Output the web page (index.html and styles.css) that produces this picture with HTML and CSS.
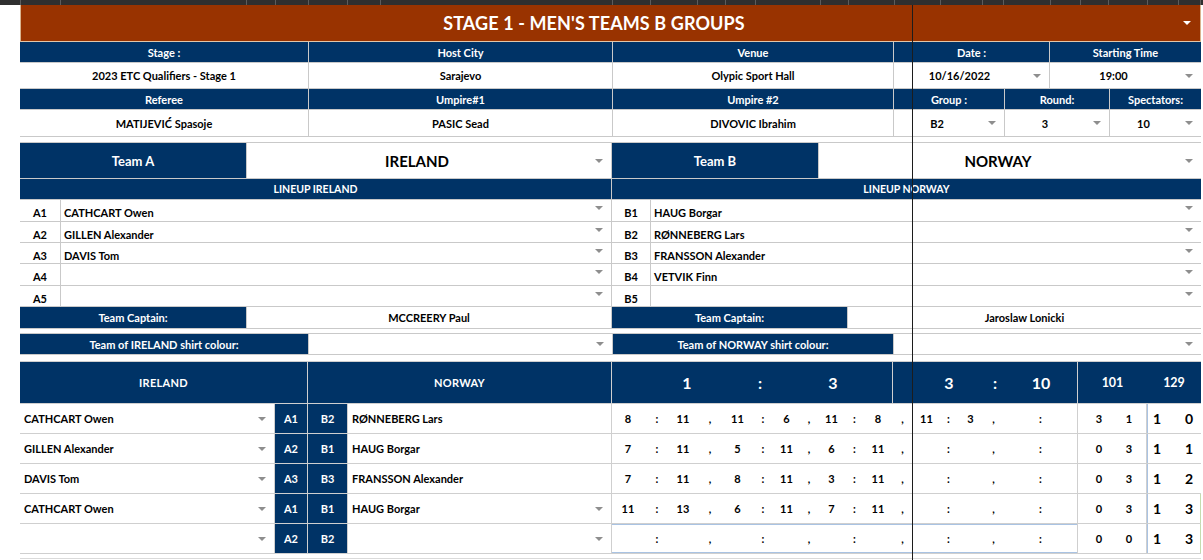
FILE: index.html
```html
<!DOCTYPE html>
<html lang="en">
<head>
<meta charset="utf-8">
<title>Stage 1 - Men's Teams B Groups</title>
<link rel="stylesheet" href="styles.css">
</head>
<body>
<div class="sheet">
  <div class="colhdr"></div>

  <div class="title">
    <h1>STAGE 1 - MEN'S TEAMS B GROUPS</h1>
    <i class="arr arr-white"></i>
  </div>

  <div class="info">
    <div class="cell navy">Stage :</div>
    <div class="cell navy">Host City</div>
    <div class="cell navy">Venue</div>
    <div class="cell navy span2">Date :</div>
    <div class="cell navy span2">Starting Time</div>

    <div class="cell">2023 ETC Qualifiers - Stage 1</div>
    <div class="cell">Sarajevo</div>
    <div class="cell">Olypic Sport Hall</div>
    <div class="cell dd span2"><span class="v">10/16/2022</span><i class="arr"></i></div>
    <div class="cell dd span2"><span class="v">19:00</span><i class="arr"></i></div>

    <div class="cell navy">Referee</div>
    <div class="cell navy">Umpire#1</div>
    <div class="cell navy">Umpire #2</div>
    <div class="cell navy">Group :</div>
    <div class="cell navy span2">Round:</div>
    <div class="cell navy">Spectators:</div>

    <div class="cell">MATIJEVIĆ Spasoje</div>
    <div class="cell">PASIC Sead</div>
    <div class="cell">DIVOVIC Ibrahim</div>
    <div class="cell dd"><span class="v">B2</span><i class="arr"></i></div>
    <div class="cell dd span2"><span class="v">3</span><i class="arr"></i></div>
    <div class="cell dd"><span class="v">10</span><i class="arr"></i></div>
  </div>

  <div class="teams">
    <div class="panel panel-a">
      <div class="cell navy team span2">Team A</div>
      <div class="cell dd teamname span2"><span class="v">IRELAND</span><i class="arr"></i></div>
      <div class="cell navy lineup spanall">LINEUP IRELAND</div>

      <div class="cell lab">A1</div>
      <div class="cell lname span3"><span class="v">CATHCART Owen</span><i class="arr"></i></div>
      <div class="cell lab">A2</div>
      <div class="cell lname span3"><span class="v">GILLEN Alexander</span><i class="arr"></i></div>
      <div class="cell lab">A3</div>
      <div class="cell lname span3"><span class="v">DAVIS Tom</span><i class="arr"></i></div>
      <div class="cell lab">A4</div>
      <div class="cell lname span3"><span class="v"></span><i class="arr"></i></div>
      <div class="cell lab">A5</div>
      <div class="cell lname span3"><span class="v"></span><i class="arr"></i></div>

      <div class="cell navy span2">Team Captain:</div>
      <div class="cell span2">MCCREERY Paul</div>
    </div>

    <div class="panel panel-b">
      <div class="cell navy team span2">Team B</div>
      <div class="cell dd teamname span3"><span class="v">NORWAY</span><i class="arr"></i></div>
      <div class="cell navy lineup spanall">LINEUP NORWAY</div>

      <div class="cell lab">B1</div>
      <div class="cell lname span4"><span class="v">HAUG Borgar</span><i class="arr"></i></div>
      <div class="cell lab">B2</div>
      <div class="cell lname span4"><span class="v">RØNNEBERG Lars</span><i class="arr"></i></div>
      <div class="cell lab">B3</div>
      <div class="cell lname span4"><span class="v">FRANSSON Alexander</span><i class="arr"></i></div>
      <div class="cell lab">B4</div>
      <div class="cell lname span4"><span class="v">VETVIK Finn</span><i class="arr"></i></div>
      <div class="cell lab">B5</div>
      <div class="cell lname span4"><span class="v"></span><i class="arr"></i></div>

      <div class="cell navy span3">Team Captain:</div>
      <div class="cell span2">Jaroslaw Lonicki</div>
    </div>
  </div>

  <div class="shirt">
    <div class="cell navy">Team of IRELAND shirt colour:</div>
    <div class="cell dd"><span class="v"></span><i class="arr"></i></div>
    <div class="cell navy">Team of NORWAY shirt colour:</div>
    <div class="cell dd"><span class="v"></span><i class="arr"></i></div>
  </div>

  <div class="match">
    <div class="cell navy mhead span2">IRELAND</div>
    <div class="cell navy mhead span2">NORWAY</div>
    <div class="cell navy score s13"><span>1</span><span>:</span><span>3</span></div>
    <div class="cell navy score s310"><span>3</span><span>:</span><span>10</span></div>
    <div class="cell navy pts span2"><span>101</span><span>129</span></div>

    <!-- row 1 -->
    <div class="cell pname"><span class="v">CATHCART Owen</span><i class="arr"></i></div>
    <div class="cell navy box">A1</div>
    <div class="cell navy box">B2</div>
    <div class="cell pname"><span class="v">RØNNEBERG Lars</span></div>
    <div class="cell games span2">
      <span>8</span><span>:</span><span>11</span><span>,</span>
      <span>11</span><span>:</span><span>6</span><span>,</span>
      <span>11</span><span>:</span><span>8</span><span>,</span>
      <span>11</span><span>:</span><span>3</span><span>,</span>
      <span></span><span>:</span><span></span>
    </div>
    <div class="cell wins"><span>3</span><span>1</span></div>
    <div class="cell sets"><span>1</span><span>0</span></div>

    <!-- row 2 -->
    <div class="cell pname"><span class="v">GILLEN Alexander</span><i class="arr"></i></div>
    <div class="cell navy box">A2</div>
    <div class="cell navy box">B1</div>
    <div class="cell pname"><span class="v">HAUG Borgar</span></div>
    <div class="cell games span2">
      <span>7</span><span>:</span><span>11</span><span>,</span>
      <span>5</span><span>:</span><span>11</span><span>,</span>
      <span>6</span><span>:</span><span>11</span><span>,</span>
      <span></span><span>:</span><span></span><span>,</span>
      <span></span><span>:</span><span></span>
    </div>
    <div class="cell wins"><span>0</span><span>3</span></div>
    <div class="cell sets"><span>1</span><span>1</span></div>

    <!-- row 3 -->
    <div class="cell pname"><span class="v">DAVIS Tom</span><i class="arr"></i></div>
    <div class="cell navy box">A3</div>
    <div class="cell navy box">B3</div>
    <div class="cell pname"><span class="v">FRANSSON Alexander</span></div>
    <div class="cell games span2">
      <span>7</span><span>:</span><span>11</span><span>,</span>
      <span>8</span><span>:</span><span>11</span><span>,</span>
      <span>3</span><span>:</span><span>11</span><span>,</span>
      <span></span><span>:</span><span></span><span>,</span>
      <span></span><span>:</span><span></span>
    </div>
    <div class="cell wins"><span>0</span><span>3</span></div>
    <div class="cell sets"><span>1</span><span>2</span></div>

    <!-- row 4 -->
    <div class="cell pname"><span class="v">CATHCART Owen</span><i class="arr"></i></div>
    <div class="cell navy box">A1</div>
    <div class="cell navy box">B1</div>
    <div class="cell pname"><span class="v">HAUG Borgar</span><i class="arr"></i></div>
    <div class="cell games span2">
      <span>11</span><span>:</span><span>13</span><span>,</span>
      <span>6</span><span>:</span><span>11</span><span>,</span>
      <span>7</span><span>:</span><span>11</span><span>,</span>
      <span></span><span>:</span><span></span><span>,</span>
      <span></span><span>:</span><span></span>
    </div>
    <div class="cell wins"><span>0</span><span>3</span></div>
    <div class="cell sets sets-green"><span>1</span><span>3</span></div>

    <!-- row 5 -->
    <div class="cell pname"><span class="v"></span><i class="arr"></i></div>
    <div class="cell navy box">A2</div>
    <div class="cell navy box">B2</div>
    <div class="cell pname"><span class="v"></span><i class="arr"></i></div>
    <div class="cell games games-last span2">
      <span></span><span>:</span><span></span><span>,</span>
      <span></span><span>:</span><span></span><span>,</span>
      <span></span><span>:</span><span></span><span>,</span>
      <span></span><span>:</span><span></span><span>,</span>
      <span></span><span>:</span><span></span>
    </div>
    <div class="cell wins"><span>0</span><span>0</span></div>
    <div class="cell sets sets-green"><span>1</span><span>3</span></div>
  </div>

  <div class="tail"></div>

  <div class="freeze"></div>
</div>
</body>
</html>
```

FILE: styles.css
```css
* { box-sizing: border-box; }

body {
  margin: 0;
  background: #fff;
  font-family: "Lato", "Liberation Sans", sans-serif;
  font-weight: 700;
  font-size: 11px;
  color: #000;
}

.sheet {
  position: relative;
  width: 1203px;
  height: 560px;
  overflow: hidden;
}

/* spreadsheet column header strip */
.colhdr {
  height: 5px;
  background-color: #2f2f2f;
  background-image:
    linear-gradient(#5c5c5c, #5c5c5c), linear-gradient(#5c5c5c, #5c5c5c),
    linear-gradient(#5c5c5c, #5c5c5c), linear-gradient(#5c5c5c, #5c5c5c),
    linear-gradient(#5c5c5c, #5c5c5c), linear-gradient(#5c5c5c, #5c5c5c),
    linear-gradient(#5c5c5c, #5c5c5c), linear-gradient(#5c5c5c, #5c5c5c),
    linear-gradient(#5c5c5c, #5c5c5c), linear-gradient(#5c5c5c, #5c5c5c),
    linear-gradient(#5c5c5c, #5c5c5c), linear-gradient(#5c5c5c, #5c5c5c),
    linear-gradient(#5c5c5c, #5c5c5c), linear-gradient(#5c5c5c, #5c5c5c),
    linear-gradient(#5c5c5c, #5c5c5c), linear-gradient(#5c5c5c, #5c5c5c),
    linear-gradient(#5c5c5c, #5c5c5c), linear-gradient(#5c5c5c, #5c5c5c),
    linear-gradient(#5c5c5c, #5c5c5c), linear-gradient(#5c5c5c, #5c5c5c),
    linear-gradient(#5c5c5c, #5c5c5c), linear-gradient(#5c5c5c, #5c5c5c),
    linear-gradient(#5c5c5c, #5c5c5c), linear-gradient(#5c5c5c, #5c5c5c);
  background-size: 1px 100%;
  background-repeat: no-repeat;
  background-position:
    20px 0, 60px 0, 246px 0, 275px 0, 308px 0, 347px 0, 380px 0, 612px 0,
    650px 0, 697px 0, 725px 0, 755px 0, 820px 0, 848px 0, 894px 0, 940px 0,
    982px 0, 1003px 0, 1050px 0, 1080px 0, 1108px 0, 1147px 0, 1178px 0, 1200px 0;
}

/* title bar */
.title {
  margin-left: 20px;
  width: 1181px;
  height: 37px;
  background: #993300;
  border-left: 1px solid #d9b48f;
  border-right: 1px solid #d9b48f;
  border-bottom: 1px solid #e3c7aa;
  display: flex;
  align-items: center;
  color: #fff;
}
.title h1 {
  flex: 1;
  margin: 0;
  padding-right: 8px;
  text-align: center;
  font-size: 18px;
  font-weight: 700;
  letter-spacing: 0.1px;
}

/* generic cells */
.cell {
  display: flex;
  align-items: center;
  justify-content: center;
  background: #fff;
  white-space: nowrap;
  overflow: hidden;
}
.navy { background: #003366; color: #fff; }
.span2 { grid-column: span 2; }
.span3 { grid-column: span 3; }
.span4 { grid-column: span 4; }
.spanall { grid-column: 1 / -1; }

/* dropdown arrow */
.arr {
  flex: none;
  width: 0;
  height: 0;
  margin: 0 8px;
  border-left: 4.5px solid transparent;
  border-right: 4.5px solid transparent;
  border-top: 4px solid #8e8e8e;
}
.arr-white { border-top-color: #ffffff; margin-right: 9px; }

.dd { justify-content: flex-start; }
.dd .v { flex: 1; text-align: center; }

/* match info grid */
.info {
  margin-left: 20px;
  width: 1181px;
  display: grid;
  grid-template-columns: 288px 303px 280px 110px 44px 59px 91px;
  grid-template-rows: 20px 25px 20px 26px;
  gap: 1px;
  background: #c9c9c9;
  border-bottom: 1px solid #c9c9c9;
}

/* teams */
.teams {
  margin-top: 5px;
  margin-left: 20px;
  width: 1181px;
  display: flex;
  border-top: 1px solid #c9c9c9;
  border-bottom: 1px solid #c9c9c9;
}
.panel {
  display: grid;
  gap: 1px;
  background: #c9c9c9;
  grid-template-rows: 35px 20px 21px 20px 20px 21px 20px 21px;
}
.panel-a {
  width: 592px;
  padding-right: 1px;
  grid-template-columns: 40px 185px 61px 302px;
}
.panel-b {
  width: 589px;
  grid-template-columns: 38px 167px 28px 45px 307px;
}
.team { font-size: 13px; }
.teamname { font-size: 15px; }
.lineup { font-size: 10.5px; }
.lab { font-size: 11px; padding-top: 4px; }
.lname { justify-content: flex-start; padding-left: 3px; padding-top: 4px; }
.lname .v { flex: 1; }
.lname .arr { align-self: flex-start; margin-top: 2px; }

/* shirt colours */
.shirt {
  margin-top: 4px;
  margin-left: 20px;
  width: 1181px;
  display: grid;
  grid-template-columns: 288px 303px 280px 307px;
  grid-template-rows: 20px;
  gap: 1px;
  background: #c9c9c9;
  border-top: 1px solid #c9c9c9;
  border-bottom: 1px solid #c9c9c9;
}

/* match table */
.match {
  margin-top: 6px;
  margin-left: 20px;
  width: 1181px;
  display: grid;
  grid-template-columns: 254px 32px 39px 263px 280px 184px 68px 54px;
  grid-template-rows: 41px repeat(5, 29px);
  gap: 1px;
  background: #cfcfcf;
  border-top: 1px solid #cfcfcf;
  border-bottom: 1px solid #cfcfcf;
}
.mhead { font-size: 11px; letter-spacing: 0.3px; }
.score {
  justify-content: flex-start;
  font-size: 16px;
}
.score span { width: 20px; text-align: center; flex: none; }
.s13 { padding-left: 65px; gap: 53px; }
.s310 { padding-left: 46px; gap: 26px; }
.pts {
  display: grid;
  grid-template-columns: 69px 54px;
  font-size: 12.5px;
}
.pts span { text-align: center; }

.pname { justify-content: flex-start; padding-left: 4px; }
.pname .v { flex: 1; }
.box { font-size: 11px; }

.games {
  display: grid;
  grid-template-columns: 32px 26px 26px 28px 27px 24px 23px 22px 23px 23px 24px 25px 23px 21px 23px 23px 24px 23px 25px;
  align-items: center;
  justify-content: stretch;
  font-size: 11px;
}
.games span { text-align: center; }
.games-last { box-shadow: inset 0 1px 0 #a9c3e3, inset 0 -1px 0 #a9c3e3; }

.wins {
  display: grid;
  grid-template-columns: 42px 18px;
  justify-content: start;
  font-size: 11px;
}
.wins span { text-align: center; }
.sets {
  justify-content: space-between;
  padding: 0 8px 0 6px;
  font-size: 14px;
  box-shadow: inset 1px 0 0 #a9c3e3;
}
.sets-green { box-shadow: inset 1px 0 0 #a9c3e3, inset -1px 0 0 #c5dcae; }

.tail {
  margin-top: 4px;
  margin-left: 20px;
  width: 1181px;
  border-top: 1px solid #dadada;
}

/* frozen pane divider */
.freeze {
  position: absolute;
  left: 912px;
  top: 5px;
  bottom: 0;
  width: 1px;
  background: #1c1c1c;
}
```
